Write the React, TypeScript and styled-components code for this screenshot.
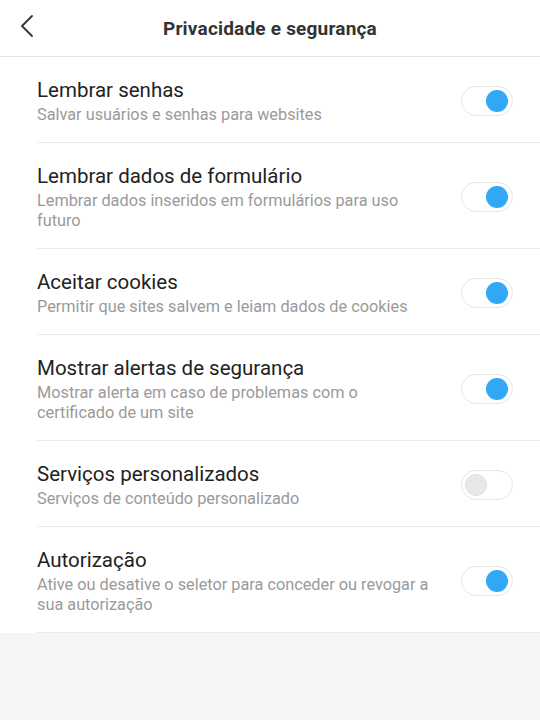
import React, { useState } from 'react';
import styled, { createGlobalStyle } from 'styled-components';

const GlobalStyle = createGlobalStyle`
  html, body {
    margin: 0;
    padding: 0;
    background: #f5f5f5;
    font-family: Roboto, "Noto Sans", "Liberation Sans", sans-serif;
  }
`;

interface ISetting {
  id: string;
  title: string;
  desc: string;
  on: boolean;
}

const SETTINGS: ISetting[] = [
  { id: 'senhas', title: 'Lembrar senhas', desc: 'Salvar usuários e senhas para websites', on: true },
  {
    id: 'form',
    title: 'Lembrar dados de formulário',
    desc: 'Lembrar dados inseridos em formulários para uso futuro',
    on: true,
  },
  { id: 'cookies', title: 'Aceitar cookies', desc: 'Permitir que sites salvem e leiam dados de cookies', on: true },
  {
    id: 'alertas',
    title: 'Mostrar alertas de segurança',
    desc: 'Mostrar alerta em caso de problemas com o certificado de um site',
    on: true,
  },
  { id: 'servicos', title: 'Serviços personalizados', desc: 'Serviços de conteúdo personalizado', on: false },
  {
    id: 'auth',
    title: 'Autorização',
    desc: 'Ative ou desative o seletor para conceder ou revogar a sua autorização',
    on: true,
  },
];

const App = () => {
  const [values, setValues] = useState<Record<string, boolean>>(
    Object.fromEntries(SETTINGS.map((s) => [s.id, s.on]))
  );

  const toggle = (id: string) => setValues((v) => ({ ...v, [id]: !v[id] }));

  return (
    <>
      <GlobalStyle />
      <Page>
        <Header>
          <BackBtn aria-label="Voltar">
            <svg width="14" height="24" viewBox="0 0 14 24" fill="none">
              <path d="M12 2L2 12l10 10" stroke="#333" strokeWidth="1.8" strokeLinecap="round" strokeLinejoin="round" />
            </svg>
          </BackBtn>
          <Title>Privacidade e segurança</Title>
        </Header>
        <List>
          {SETTINGS.map((s) => (
            <Row key={s.id}>
              <Texts>
                <RowTitle>{s.title}</RowTitle>
                <RowDesc>{s.desc}</RowDesc>
              </Texts>
              <Switch $on={values[s.id]} onClick={() => toggle(s.id)} aria-pressed={values[s.id]}>
                <Knob $on={values[s.id]} />
              </Switch>
            </Row>
          ))}
        </List>
      </Page>
    </>
  );
};

const Page = styled.div`
  width: 540px;
  min-height: 720px;
  background: #f5f5f5;
`;

const Header = styled.header`
  position: relative;
  height: 56px;
  background: #fff;
  border-bottom: 1px solid #e4e4e4;
  display: flex;
  align-items: center;
  justify-content: center;
`;

const BackBtn = styled.button`
  position: absolute;
  left: 20px;
  top: 14px;
  padding: 0;
  border: none;
  background: none;
  width: 14px;
  height: 24px;
  display: flex;
`;

const Title = styled.h1`
  margin: 0;
  font-size: 19px;
  font-weight: 700;
  color: #333;
  letter-spacing: 0.2px;
`;

const List = styled.div`
  background: #fff;
  padding-left: 37px;
`;

const Row = styled.div`
  display: flex;
  align-items: center;
  gap: 16px;
  padding: 20px 27px 17px 0;
  border-bottom: 1px solid #ebebeb;
`;

const Texts = styled.div`
  flex: 1;
  min-width: 0;
`;

const RowTitle = styled.div`
  font-size: 20.5px;
  line-height: 26px;
  color: #222;
`;

const RowDesc = styled.div`
  margin-top: 2px;
  font-size: 16.3px;
  line-height: 20px;
  color: #9a9a9a;
  max-width: 400px;
`;

const Switch = styled.button<{ $on: boolean }>`
  position: relative;
  flex: none;
  width: 52px;
  height: 30px;
  padding: 0;
  border-radius: 15px;
  border: 1px solid #e6e6e6;
  background: #fff;
  cursor: pointer;
`;

const Knob = styled.span<{ $on: boolean }>`
  position: absolute;
  top: 3px;
  left: ${(p) => (p.$on ? '24px' : '3px')};
  width: 22px;
  height: 22px;
  border-radius: 50%;
  box-sizing: border-box;
  background: ${(p) => (p.$on ? '#30a8f6' : '#e8e8e8')};
  border: ${(p) => (p.$on ? 'none' : '1px solid #dedede')};
`;

export default App;
